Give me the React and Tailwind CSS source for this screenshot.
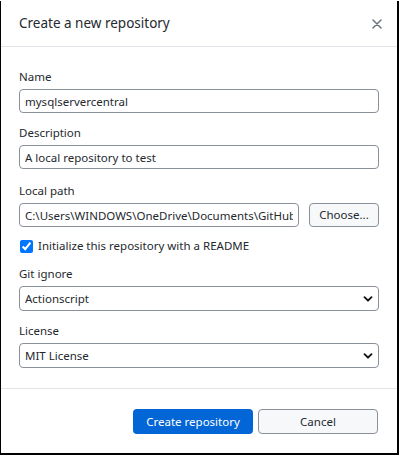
import React, { useState } from "react";

const font = { fontFamily: '"Noto Sans", "Open Sans", sans-serif' };

function Chevron() {
  return (
    <svg width="10" height="10" viewBox="0 0 10 10" className="absolute right-[6px] top-1/2 -translate-y-1/2 pointer-events-none">
      <path d="M1.5 3.2 L5 6.7 L8.5 3.2" fill="none" stroke="#111" strokeWidth="1.9" strokeLinecap="round" strokeLinejoin="round" />
    </svg>
  );
}

function Field({ label, children, className = "" }) {
  return (
    <div className={className}>
      <label className="block text-[11.5px] leading-[16px] text-[#24292e]">{label}</label>
      <div className="mt-[4px]">{children}</div>
    </div>
  );
}

export default function App() {
  const [name, setName] = useState("mysqlservercentral");
  const [description, setDescription] = useState("A local repository to test");
  const [path, setPath] = useState("C:\\Users\\WINDOWS\\OneDrive\\Documents\\GitHub");
  const [readme, setReadme] = useState(true);
  const [gitignore, setGitignore] = useState("Actionscript");
  const [license, setLicense] = useState("MIT License");

  const inputClass =
    "block w-full h-[24px] rounded-[4px] border border-[#8a9099] bg-white px-[5px] text-[11.5px] text-[#24292e] outline-none";
  const selectClass =
    "block w-full h-[25px] appearance-none rounded-[4px] border border-[#8a9099] bg-white pl-[5px] pr-[20px] text-[11.5px] text-[#24292e] outline-none";

  return (
    <div className="w-[399px] h-[455px] bg-black" style={font}>
      <div className="ml-[1px] mt-[1px] w-[396px] h-[452px] bg-white flex flex-col">
        <div className="h-[46px] shrink-0 border-b border-[#e1e4e8] flex items-center justify-between pl-[18px] pr-[12px]">
          <h1 className="text-[13.5px] text-[#24292e]">Create a new repository</h1>
          <button className="w-[16px] h-[16px] flex items-center justify-center">
            <svg width="10" height="10" viewBox="0 0 10 10">
              <path d="M1 1 L9 9 M9 1 L1 9" stroke="#6a737d" strokeWidth="1.5" strokeLinecap="round" />
            </svg>
          </button>
        </div>

        <div className="px-[18px] pt-[22px] pb-[20px] border-b border-[#e1e4e8]">
          <Field label="Name">
            <input className={inputClass} value={name} onChange={(e) => setName(e.target.value)} />
          </Field>
          <Field label="Description" className="mt-[12px]">
            <input className={inputClass} value={description} onChange={(e) => setDescription(e.target.value)} />
          </Field>
          <Field label="Local path" className="mt-[14px]">
            <div className="flex gap-[10px]">
              <input className={inputClass + " flex-1 min-w-0"} value={path} onChange={(e) => setPath(e.target.value)} />
              <button className="w-[70px] h-[24px] shrink-0 rounded-[4px] border border-[#8a9099] bg-[#f6f8fa] text-[11.5px] text-[#24292e]">
                Choose...
              </button>
            </div>
          </Field>
          <label className="mt-[12px] flex items-center gap-[5px] h-[14px] text-[11.5px] text-[#24292e]">
            <input
              type="checkbox"
              checked={readme}
              onChange={(e) => setReadme(e.target.checked)}
              className="w-[13px] h-[13px] m-0 ml-[1px] accent-[#0075ff]"
            />
            Initialize this repository with a README
          </label>
          <Field label="Git ignore" className="mt-[13px]">
            <div className="relative">
              <select className={selectClass} value={gitignore} onChange={(e) => setGitignore(e.target.value)}>
                <option>None</option>
                <option>Actionscript</option>
                <option>Node</option>
              </select>
              <Chevron />
            </div>
          </Field>
          <Field label="License" className="mt-[12px]">
            <div className="relative">
              <select className={selectClass} value={license} onChange={(e) => setLicense(e.target.value)}>
                <option>None</option>
                <option>MIT License</option>
                <option>Apache License 2.0</option>
              </select>
              <Chevron />
            </div>
          </Field>
        </div>

        <div className="flex justify-end gap-[5px] pt-[20px] pr-[19px]">
          <button className="w-[120px] h-[25px] rounded-[4px] bg-[#0366d6] text-white text-[11.5px]">Create repository</button>
          <button className="w-[120px] h-[25px] rounded-[4px] border border-[#8a9099] bg-[#f6f8fa] text-[11.5px] text-[#24292e]">
            Cancel
          </button>
        </div>
      </div>
    </div>
  );
}
